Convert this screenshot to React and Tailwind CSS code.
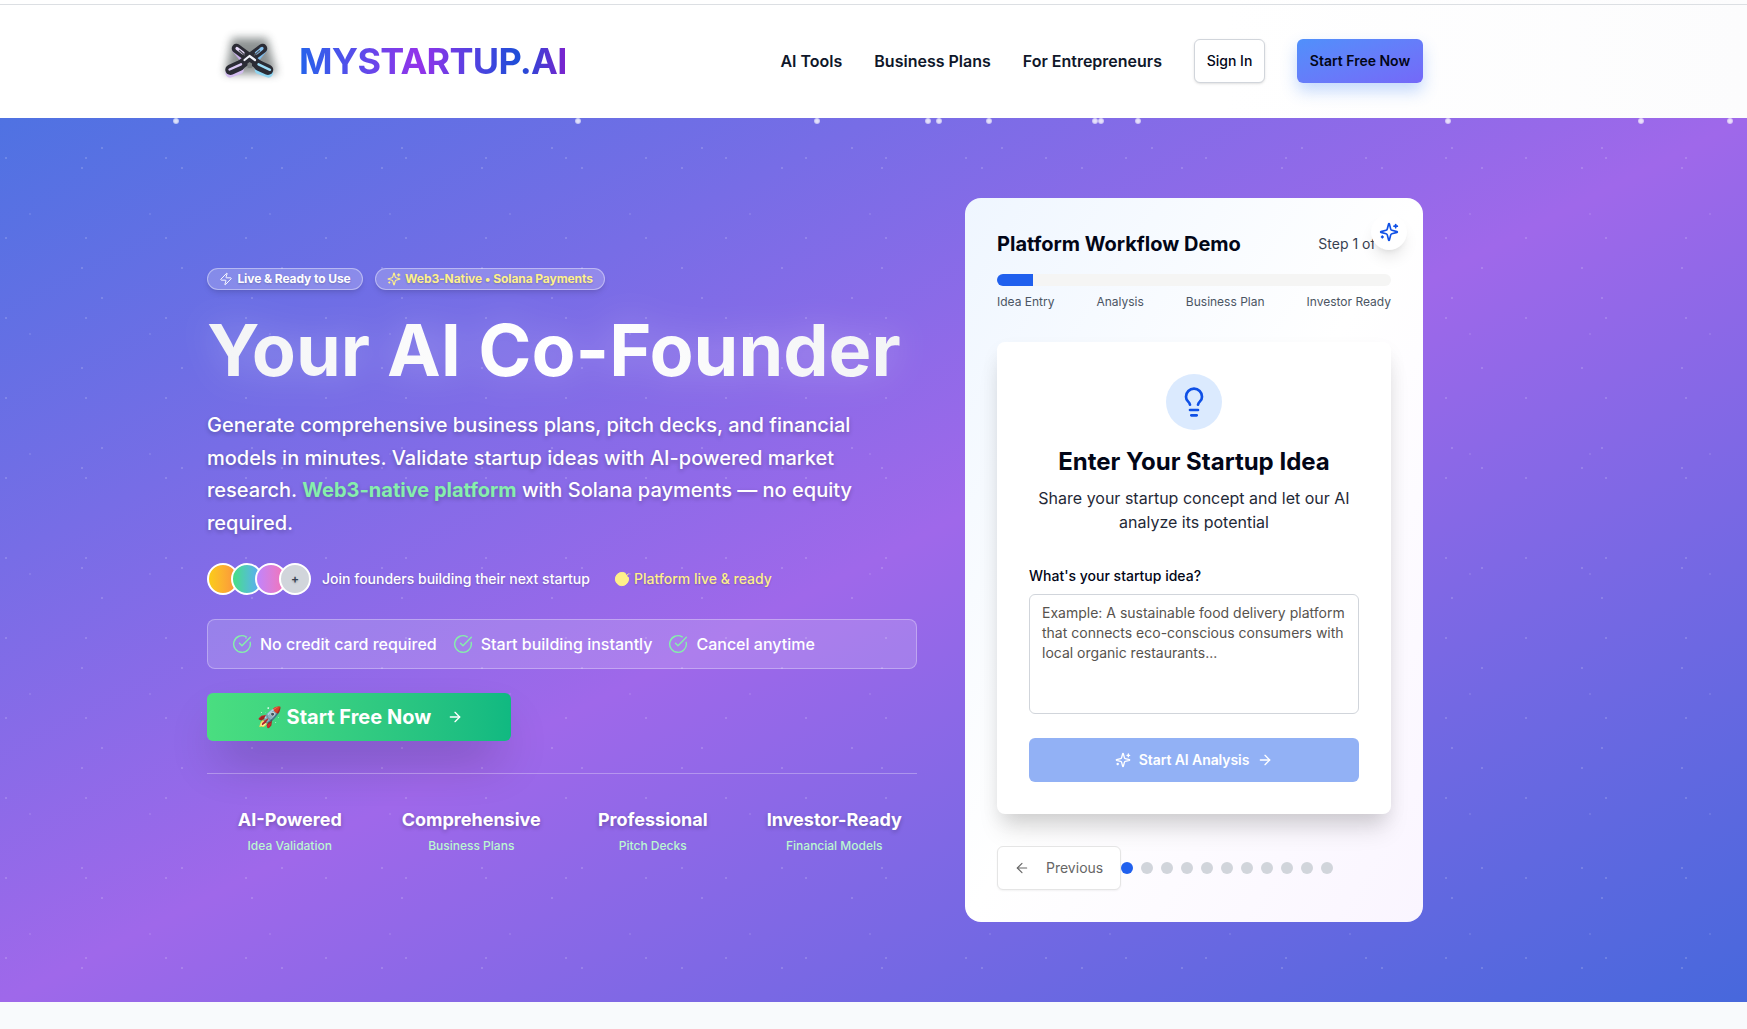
import React from "react";
import { Zap, ArrowRight, ArrowLeft, Lightbulb } from "lucide-react";

const sparks = [176, 578, 817, 928, 939, 989, 1095, 1101, 1138, 1448, 1641, 1730];

const stats = [
  ["AI-Powered", "Idea Validation"],
  ["Comprehensive", "Business Plans"],
  ["Professional", "Pitch Decks"],
  ["Investor-Ready", "Financial Models"],
];

function Logo() {
  return (
    <svg width="96" height="84" viewBox="0 0 96 84" className="shrink-0">
      <defs>
        <filter id="haze" x="-50%" y="-50%" width="200%" height="200%">
          <feGaussianBlur stdDeviation="4.5" />
        </filter>
      </defs>
      <path d="M25 19H60L70 55H18Z" fill="#46504f" opacity="0.62" filter="url(#haze)" />
      <g fill="none" strokeLinecap="round" strokeLinejoin="round">
        <rect x="18" y="47.5" width="19" height="9.5" rx="4.7" transform="rotate(-20 27.5 52)" fill="#d3bdf0" />
        <rect x="47.5" y="47.5" width="19" height="9.5" rx="4.7" transform="rotate(20 57 52)" fill="#8fd6f2" />
        <path d="M27 31L36 42" stroke="#c9b0ea" strokeWidth="4" />
        <path d="M58 31L50 41" stroke="#7dbcec" strokeWidth="4" />
        <path d="M29.5 29.5L53 47" stroke="#2b2c35" strokeWidth="9.5" />
        <path d="M55.5 29.5L32 47" stroke="#2b2c35" strokeWidth="9.5" />
        <rect x="18" y="43.5" width="20" height="10.5" rx="5.2" transform="rotate(-24 28 49)" fill="#2b2c35" />
        <rect x="46.5" y="43.5" width="20" height="10.5" rx="5.2" transform="rotate(24 56.5 49)" fill="#2b2c35" />
        <path d="M30 29.5L36 34" stroke="#e6d9f9" strokeWidth="3.2" />
        <path d="M55 29.5L49.5 34" stroke="#86c4f2" strokeWidth="3.2" />
        <path d="M32.5 31.5L37.5 36M52.5 31.8L47.5 36" stroke="#55565f" strokeWidth="1.4" />
        <path d="M22.5 50.5L34 45.3" stroke="#d9c8f3" strokeWidth="2.4" />
        <path d="M51.5 45.3L63 50.8" stroke="#9bdcf6" strokeWidth="2.4" />
        <path d="M37.5 41L42.5 37L48 41" stroke="#f1f3fb" strokeWidth="2.2" />
        <path d="M40.5 44.5L42.5 43L45 44.5V49H40.5Z" fill="#7d8382" />
      </g>
    </svg>
  );
}

function Sparkles({ className }) {
  return (
    <svg viewBox="0 0 24 24" fill="none" stroke="currentColor" strokeWidth="2" strokeLinecap="round" strokeLinejoin="round" className={className}>
      <path d="M9.937 15.5A2 2 0 0 0 8.5 14.063l-6.135-1.582a.5.5 0 0 1 0-.962L8.5 9.936A2 2 0 0 0 9.937 8.5l1.582-6.135a.5.5 0 0 1 .963 0L14.063 8.5A2 2 0 0 0 15.5 9.937l6.135 1.581a.5.5 0 0 1 0 .964L15.5 14.063a2 2 0 0 0-1.437 1.437l-1.582 6.135a.5.5 0 0 1-.963 0z" />
      <path d="M20 3v4" />
      <path d="M22 5h-4" />
      <path d="M4 17v2" />
      <path d="M5 18H3" />
    </svg>
  );
}

function CheckCircle({ className, fill = "none", strokeWidth = 2 }) {
  return (
    <svg viewBox="0 0 24 24" fill={fill} stroke="currentColor" strokeWidth={strokeWidth} strokeLinecap="round" strokeLinejoin="round" className={className}>
      <path d="M21.8 10A10 10 0 1 1 17 3.34" />
      <path d="m9 11 3 3L22 4" />
    </svg>
  );
}

function Header() {
  return (
    <header className="h-[118px] bg-gradient-to-r from-white from-70% to-[#fcfcfd]">
      <div className="h-[5px] border-b border-[#dcdfe3]" />
      <div className="ml-[207px] flex h-[112px] w-[1216px] items-center justify-between">
        <div className="flex items-center">
          <Logo />
          <span className="-ml-[4px] bg-[linear-gradient(90deg,#2563eb_0%,#9333ea_45%,#1d4ed8_82%,#7e22ce_100%)] bg-clip-text text-4xl leading-[44px] font-bold tracking-[-0.72px] text-transparent">
            MYSTARTUP.AI
          </span>
        </div>
        <nav className="flex items-center gap-8 text-base font-semibold text-[#0f172a]">
          <a>AI Tools</a>
          <a>Business Plans</a>
          <a>For Entrepreneurs</a>
          <button className="h-11 w-[71px] rounded-md border border-[#d1d5db] bg-white text-sm font-medium text-[#020617] shadow-sm">Sign In</button>
          <button className="h-11 w-[126px] rounded-md bg-gradient-to-br from-[#4f90fb] to-[#7468f8] text-sm font-semibold text-[#020617] shadow-[0_8px_16px_rgba(59,130,246,0.3)]">
            Start Free Now
          </button>
        </nav>
      </div>
    </header>
  );
}

function Pitch() {
  return (
    <div className="w-[710px] pt-0.5 text-white">
      <div className="flex gap-3 text-xs font-bold [text-shadow:0_1px_2px_rgba(0,0,0,0.2)]">
        <span className="flex h-[22px] w-[156px] items-center justify-center gap-1 rounded-full border border-white/40 bg-white/20 whitespace-nowrap shadow-md tracking-[-0.08px]">
          <Zap className="size-3.5" strokeWidth={1.6} />Live &amp; Ready to Use
        </span>
        <span className="flex h-[22px] w-[230px] items-center justify-center gap-1 rounded-full border border-white/40 bg-white/20 whitespace-nowrap text-[#fef08a] shadow-md tracking-[-0.08px]">
          <Sparkles className="size-3.5" />Web3-Native • Solana Payments
        </span>
      </div>
      <h1 className="mt-[15px] whitespace-nowrap text-[72px] leading-[90px] font-bold [filter:drop-shadow(0_0_18px_rgba(255,255,255,0.25))]">
        <span className="bg-[linear-gradient(90deg,#f3f4f6,#ffffff_50%,#f3f4f6)] bg-clip-text text-transparent">Your AI Co-Founder</span>
      </h1>
      <p className="mt-[14.5px] text-xl leading-[32.5px] font-medium [text-shadow:0_2px_4px_rgba(0,0,0,0.25)]">
        Generate comprehensive business plans, pitch decks, and financial
        <br />
        models in minutes. Validate startup ideas with AI-powered market
        <br />
        research. <span className="font-bold text-[#86efac]">Web3-native platform</span> with Solana payments — no equity
        <br />
        required.
      </p>
      <div className="mt-6 flex h-8 items-center text-sm font-medium [text-shadow:0_1px_2px_rgba(0,0,0,0.2)]">
        <div className="flex -space-x-2">
          <span className="size-8 rounded-full border-2 border-white bg-gradient-to-r from-[#facc15] to-[#fb923c]" />
          <span className="size-8 rounded-full border-2 border-white bg-gradient-to-r from-[#4ade80] to-[#60a5fa]" />
          <span className="size-8 rounded-full border-2 border-white bg-gradient-to-r from-[#c084fc] to-[#f472b6]" />
          <span className="flex size-8 items-center justify-center rounded-full border-2 border-white bg-[#d1d5db] text-xs font-semibold text-[#374151]">+</span>
        </div>
        <span className="ml-[11px]">Join founders building their next startup</span>
        <span className="ml-6 flex items-center gap-1 text-[#fef08a]">
          <CheckCircle className="size-4" fill="currentColor" strokeWidth={1.5} />Platform live &amp; ready
        </span>
      </div>
      <div className="mt-6 flex h-[50px] items-center gap-4 rounded-lg border border-white/30 bg-white/15 pl-6 text-base font-medium">
        {["No credit card required", "Start building instantly", "Cancel anytime"].map((t) => (
          <span key={t} className="flex items-center gap-2">
            <CheckCircle className="size-5 text-[#86efac]" strokeWidth={1.7} />{t}
          </span>
        ))}
      </div>
      <button className="mt-6 flex h-12 w-[304px] items-center justify-center rounded-md bg-gradient-to-r from-[#4ade80] to-[#10b981] pl-0.5 text-xl font-bold whitespace-nowrap shadow-[0_25px_50px_-12px_rgba(0,0,0,0.3)]">
        🚀 Start Free Now
        <ArrowRight className="ml-4 size-4" />
      </button>
      <div className="mt-8 grid grid-cols-4 gap-4 border-t border-white/30 pt-8 text-center">
        {stats.map(([a, b]) => (
          <div key={a}>
            <div className="text-lg leading-7 font-bold [text-shadow:0_2px_4px_rgba(0,0,0,0.25)]">{a}</div>
            <div className="mt-1 text-xs leading-4 font-medium text-[#bbf7d0]">{b}</div>
          </div>
        ))}
      </div>
    </div>
  );
}

function Demo() {
  return (
    <section className="relative h-[724px] w-[458px] rounded-2xl bg-gradient-to-br from-[#eff6ff] via-white to-[#faf5ff] p-8 text-[#020617]">
      <div className="flex h-7 items-center justify-between">
        <h2 className="text-xl font-bold">Platform Workflow Demo</h2>
        <span className="text-sm text-[#374151]">Step 1 of 11</span>
      </div>
      <div className="mt-4 h-3 overflow-hidden rounded-full bg-[#f5f5f4]">
        <div className="h-full w-[36px] bg-[#2060ee]" />
      </div>
      <div className="mt-2 flex justify-between text-xs leading-4 text-[#4b5563]">
        <span>Idea Entry</span>
        <span>Analysis</span>
        <span>Business Plan</span>
        <span>Investor Ready</span>
      </div>
      <div className="mt-8 flex h-[472px] flex-col items-center rounded-lg bg-white p-8 shadow-[0_20px_25px_-5px_rgba(0,0,0,0.12),0_8px_20px_-4px_rgba(0,0,0,0.1)]">
        <div className="flex size-14 items-center justify-center rounded-full bg-[#dbeafe]">
          <Lightbulb className="size-8 text-[#0f50e6]" />
        </div>
        <h3 className="mt-4 text-2xl leading-8 font-bold">Enter Your Startup Idea</h3>
        <p className="mt-2 text-center text-base leading-6 text-[#1f2937]">
          Share your startup concept and let our AI
          <br />
          analyze its potential
        </p>
        <label className="mt-8 w-full text-sm leading-5 font-medium">What's your startup idea?</label>
        <div className="mt-2 h-[120px] w-full rounded-md border border-[#d1d5db] px-3 py-2 text-sm leading-5 whitespace-nowrap text-[#57534e]">
          Example: A sustainable food delivery platform
          <br />
          that connects eco-conscious consumers with
          <br />
          local organic restaurants...
        </div>
        <button className="mt-6 flex h-11 w-full items-center justify-center gap-2 rounded-md bg-[#92b1f5] text-sm font-semibold tracking-[-0.08px] text-white">
          <Sparkles className="size-4" />Start AI Analysis<ArrowRight className="size-4" />
        </button>
      </div>
      <div className="mt-8 flex items-center">
        <button className="flex h-11 w-[124px] items-center rounded-md border border-[#e5e5e5] bg-white pl-4 text-sm text-[#666] shadow-xs">
          <ArrowLeft className="mr-4 size-4" strokeWidth={1.7} />Previous
        </button>
        <div className="flex gap-2">
          {Array.from({ length: 11 }, (_, i) => (
            <span key={i} className={i === 0 ? "size-3 rounded-full bg-[#2060ee]" : "size-3 rounded-full bg-[#d1d5db]"} />
          ))}
        </div>
      </div>
      <div className="absolute top-4 right-4 rounded-full bg-white p-2 shadow-lg">
        <Sparkles className="size-5 text-[#0f50e6]" />
      </div>
    </section>
  );
}

export default function App() {
  return (
    <div className="h-[1029px] w-[1747px] overflow-hidden bg-[#f8fafc] font-['Inter',sans-serif]">
      <Header />
      <main className="relative h-[884px] bg-[linear-gradient(to_bottom_right,#4f72e2_0%,#9f68ea_50%,#4768dc_100%)]">
        <div className="absolute inset-0 bg-[radial-gradient(circle_at_6px_40px,#ffffff28_1px,transparent_1.1px)] bg-[length:80px_80px]" />
        <div className="absolute inset-0 bg-[radial-gradient(circle_at_82px_50px,#ffffff28_1px,transparent_1.1px)] bg-[length:100px_100px]" />
        <div className="absolute inset-0 bg-[radial-gradient(circle_at_30px_96px,#ffffff18_1px,transparent_1.1px)] bg-[length:120px_120px]" />
        <div className="absolute inset-0 bg-[radial-gradient(circle_at_102px_30px,#ffffff28_1px,transparent_1.1px)] bg-[length:150px_150px]" />
        {sparks.map((x) => (
          <span key={x} className="absolute top-0 size-1.5 rounded-full bg-[radial-gradient(circle,#ffffffcc_30%,#ffffff55_100%)]" style={{ left: x - 3 }} />
        ))}
        <div className="relative ml-[207px] flex h-full w-[1216px] items-center justify-between">
          <Pitch />
          <Demo />
        </div>
      </main>
    </div>
  );
}
